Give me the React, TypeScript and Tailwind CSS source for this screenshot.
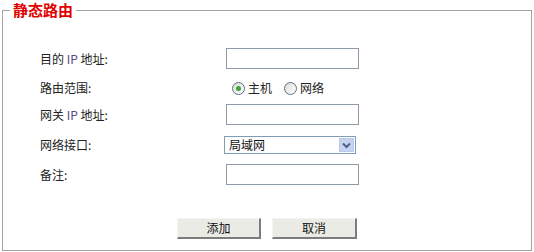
import React from "react";

const font = { fontFamily: '"Noto Sans CJK SC", "Liberation Sans", sans-serif' };

function TextInput() {
  return (
    <input
      type="text"
      className="h-[21px] w-[133px] border border-[#8e9aa6] bg-white px-1 text-[12px] outline-none"
    />
  );
}

function Radio({ checked, label }: { checked?: boolean; label: string }) {
  return (
    <label className="flex items-center">
      <span className="flex h-[13px] w-[13px] items-center justify-center rounded-full border border-[#5a7089] bg-gradient-to-br from-[#dcdcd6] to-white">
        {checked && <span className="h-[5px] w-[5px] rounded-full bg-[#3fa43a]" />}
      </span>
      <span className="ml-[3px] text-[12px] text-[#222]">{label}</span>
    </label>
  );
}

function Btn({ children, w }: { children: React.ReactNode; w: string }) {
  return (
    <button
      className={`${w} h-[21px] border-t border-l border-t-[#f4f4f4] border-l-[#f4f4f4] border-r-2 border-b-2 border-r-[#7c7c7c] border-b-[#7c7c7c] bg-[#ebebe6] text-[12px] leading-none text-[#111]`}
    >
      {children}
    </button>
  );
}

function Row({ label, h, mt, children }: { label: React.ReactNode; h: string; mt: string; children: React.ReactNode }) {
  return (
    <div className={`flex items-center ${h} ${mt}`}>
      <div className="w-[223px] pl-[37px] text-[12px] text-[#222]">{label}</div>
      {children}
    </div>
  );
}

export default function App() {
  return (
    <div className="h-[252px] w-[534px] bg-white" style={font}>
      <fieldset className="ml-[2px] h-[251px] w-[530px] border border-[#a3a3a3]">
        <legend className="ml-[7px] px-[3px] text-[15px] font-bold leading-[20px] text-[#e00000]">静态路由</legend>

        <Row label={<>目的 <span className="text-[#5b4a7b]">IP</span> 地址:</>} h="h-[21px]" mt="mt-[28px]">
          <TextInput />
        </Row>

        <Row label="路由范围:" h="h-[18px]" mt="mt-[10px]">
          <div className="ml-[6px] flex items-center gap-[12px]">
            <Radio checked label="主机" />
            <Radio label="网络" />
          </div>
        </Row>

        <Row label={<>网关 <span className="text-[#5b4a7b]">IP</span> 地址:</>} h="h-[21px]" mt="mt-[7px]">
          <TextInput />
        </Row>

        <Row label="网络接口:" h="h-[18px]" mt="mt-[11px]">
          <div className="-ml-[2px] flex h-[18px] w-[132px] items-center border border-[#7f9db9] bg-white">
            <span className="flex-1 pl-[4px] text-[12px] leading-none text-[#111]">局域网</span>
            <span className="mr-[1px] flex h-[14px] w-[15px] items-center justify-center border border-[#b9c9ea] bg-[#c6d4f0]">
              <svg width="9" height="7" viewBox="0 0 9 7">
                <path d="M1 1.5 L4.5 5 L8 1.5" stroke="#4d6185" strokeWidth="2" fill="none" />
              </svg>
            </span>
          </div>
        </Row>

        <Row label="备注:" h="h-[21px]" mt="mt-[10px]">
          <TextInput />
        </Row>

        <div className="mt-[33px] flex pl-[174px]">
          <Btn w="w-[84px]">添加</Btn>
          <div className="w-[11px]" />
          <Btn w="w-[85px]">取消</Btn>
        </div>
      </fieldset>
    </div>
  );
}
